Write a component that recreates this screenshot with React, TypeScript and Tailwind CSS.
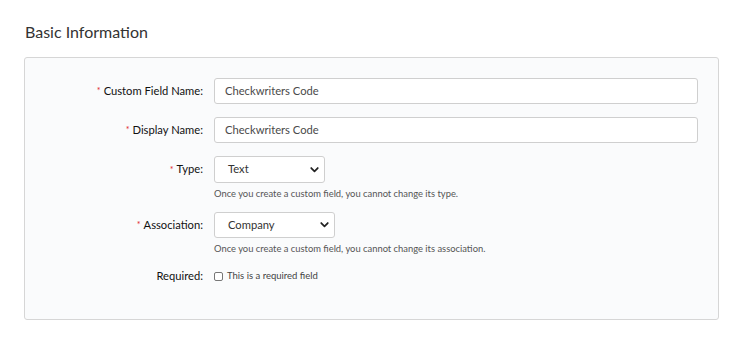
import React from 'react';

const Req = () => <span className="mr-[3px] align-[3px] text-[9px] text-[#e0262c]">*</span>;

const Chevron = () => (
  <svg width="9" height="6" viewBox="0 0 10 7" className="shrink-0">
    <path d="M1.2 1.2 L5 5 L8.8 1.2" fill="none" stroke="#222" strokeWidth="2" strokeLinecap="round" strokeLinejoin="round" />
  </svg>
);

const Label: React.FC<{ required?: boolean; children: React.ReactNode; h?: string }> = ({ required, children, h = 'h-[26px]' }) => (
  <div className={`w-[178px] shrink-0 flex items-center justify-end text-[11.2px] text-[#111] ${h}`}>
    {required && <Req />}
    {children}
  </div>
);

const App: React.FC = () => {
  return (
    <div className="w-[741px] h-[340px] bg-white font-['Lato','Noto_Sans',sans-serif]">
      <div className="pt-[20px] pl-[25px] text-[16px] leading-[24px] text-[#333]">Basic Information</div>

      <div className="mt-[13px] ml-[24px] w-[695px] h-[263px] rounded-[3px] border border-[#d6d6d6] bg-[#fafbfc] pt-[20px]">
        {/* Custom Field Name */}
        <div className="flex">
          <Label required>Custom Field Name:</Label>
          <div className="ml-[11px] w-[484px] h-[26px] rounded-[3px] border border-[#cfcfcf] bg-white flex items-center pl-[10px] text-[11.2px] text-[#4a4a4a]">
            Checkwriters Code
          </div>
        </div>

        {/* Display Name */}
        <div className="flex mt-[13px]">
          <Label required>Display Name:</Label>
          <div className="ml-[11px] w-[484px] h-[26px] rounded-[3px] border border-[#cfcfcf] bg-white flex items-center pl-[10px] text-[11.2px] text-[#4a4a4a]">
            Checkwriters Code
          </div>
        </div>

        {/* Type */}
        <div className="flex mt-[13px]">
          <Label required h="h-[27px]">Type:</Label>
          <div className="ml-[11px]">
            <div className="w-[111px] h-[27px] rounded-[3px] border border-[#cfcfcf] bg-white flex items-center justify-between pl-[13px] pr-[5px] text-[11.2px] text-[#333]">
              <span>Text</span>
              <Chevron />
            </div>
            <div className="mt-[4px] text-[9.4px] leading-[13px] text-[#555]">Once you create a custom field, you cannot change its type.</div>
          </div>
        </div>

        {/* Association */}
        <div className="flex mt-[12px]">
          <Label required>Association:</Label>
          <div className="ml-[11px]">
            <div className="w-[121px] h-[26px] rounded-[3px] border border-[#cfcfcf] bg-white flex items-center justify-between pl-[13px] pr-[5px] text-[11.2px] text-[#333]">
              <span>Company</span>
              <Chevron />
            </div>
            <div className="mt-[4px] text-[9.4px] leading-[13px] text-[#555]">Once you create a custom field, you cannot change its association.</div>
          </div>
        </div>

        {/* Required */}
        <div className="flex mt-[13px]">
          <Label h="h-[16px]">Required:</Label>
          <div className="ml-[11px] flex items-center h-[16px] gap-[4px] text-[9.5px] text-[#444]">
            <span className="w-[9px] h-[9px] rounded-[2px] border border-[#777] bg-white" />
            <span>This is a required field</span>
          </div>
        </div>
      </div>
    </div>
  );
};

export default App;
